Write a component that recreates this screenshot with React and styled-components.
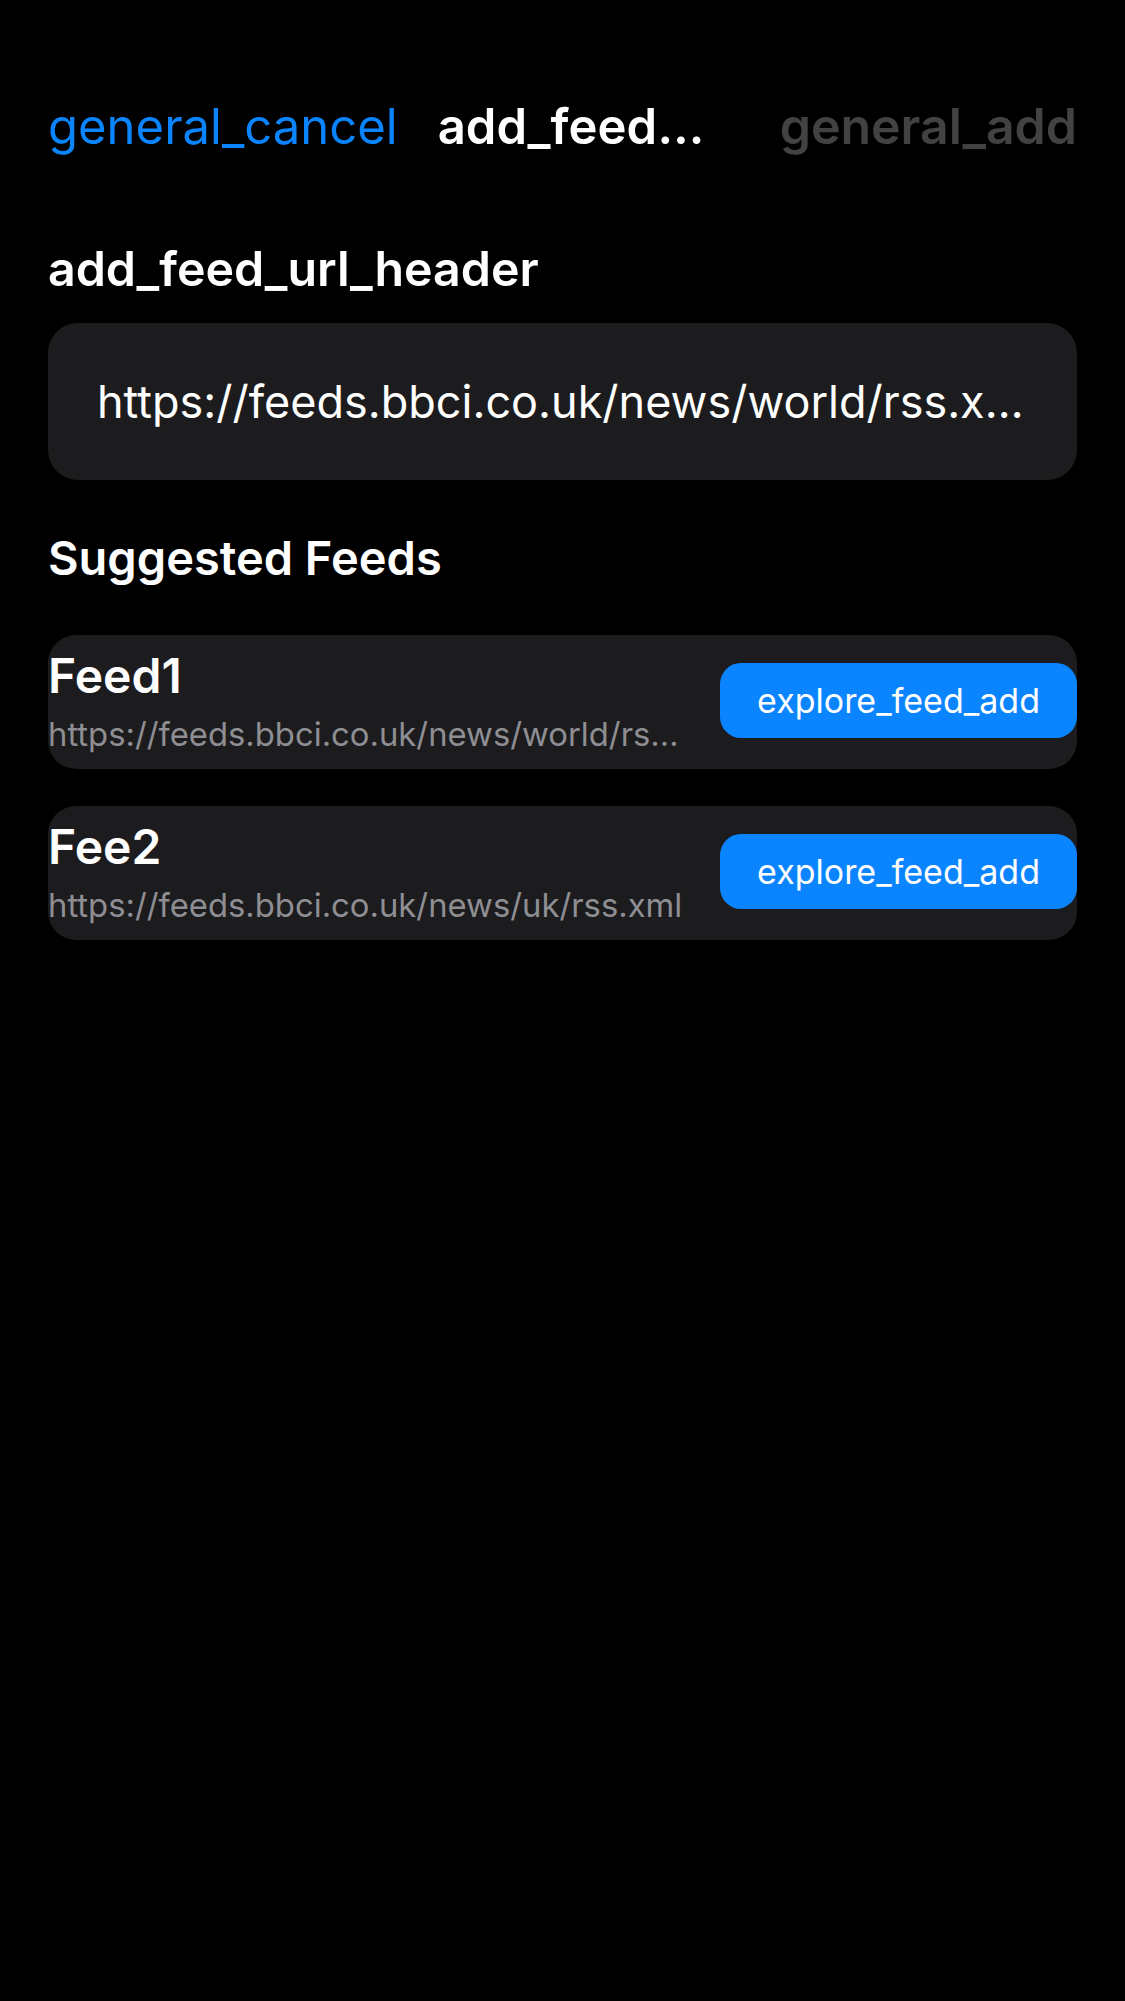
import React from 'react'
import styled, { createGlobalStyle } from 'styled-components'

const feeds = [
  { name: 'Feed1', url: 'https://feeds.bbci.co.uk/news/world/rss.xml' },
  { name: 'Fee2', url: 'https://feeds.bbci.co.uk/news/uk/rss.xml' },
]

const App = () => {
  return (
    <Screen>
      <GlobalStyle />
      <NavBar>
        <NavButton>general_cancel</NavButton>
        <NavTitle>add_feed_title</NavTitle>
        <NavButton $disabled>general_add</NavButton>
      </NavBar>
      <Content>
        <SectionHeader>add_feed_url_header</SectionHeader>
        <UrlField>
          <span>https://feeds.bbci.co.uk/news/world/rss.xml</span>
        </UrlField>
        <SectionHeader $spaced>Suggested Feeds</SectionHeader>
        <FeedList>
          {feeds.map((feed) => (
            <FeedCard key={feed.name}>
              <FeedInfo>
                <FeedName>{feed.name}</FeedName>
                <FeedUrl>{feed.url}</FeedUrl>
              </FeedInfo>
              <AddButton>explore_feed_add</AddButton>
            </FeedCard>
          ))}
        </FeedList>
      </Content>
    </Screen>
  )
}

const GlobalStyle = createGlobalStyle`
  html, body {
    margin: 0;
    padding: 0;
    background: #000;
  }
  body {
    font-family: Inter, "Noto Sans", "Liberation Sans", sans-serif;
    color: #fff;
    -webkit-font-smoothing: antialiased;
  }
`

const Screen = styled.div`
  min-height: 2001px;
  background: #000;
`

const NavBar = styled.header`
  display: flex;
  align-items: baseline;
  padding: 96px 48px 0;
  font-size: 49px;
  line-height: 61px;
`

const NavButton = styled.span`
  color: ${(p) => (p.$disabled ? '#424245' : '#0a84ff')};
  font-weight: ${(p) => (p.$disabled ? 600 : 400)};
  font-size: ${(p) => (p.$disabled ? '50px' : '49px')};
  white-space: nowrap;
  &:last-child {
    margin-left: auto;
  }
`

const NavTitle = styled.span`
  margin-left: 40px;
  width: 276px;
  font-weight: 600;
  white-space: nowrap;
  overflow: hidden;
  text-overflow: ellipsis;
`

const Content = styled.main`
  padding: 83px 48px 0;
  display: flex;
  flex-direction: column;
`

const SectionHeader = styled.h2`
  margin: ${(p) => (p.$spaced ? '49px 0 48px' : '0 0 25px')};
  font-size: ${(p) => (p.$spaced ? '47px' : '48.3px')};
  line-height: 58px;
  font-weight: 600;
`

const UrlField = styled.div`
  height: 157px;
  box-sizing: border-box;
  padding: 0 52px 0 49px;
  display: flex;
  align-items: center;
  background: #1c1c1e;
  border-radius: 30px;
  font-size: 45px;
  line-height: 61px;

  span {
    white-space: nowrap;
    overflow: hidden;
    text-overflow: ellipsis;
  }
`

const FeedList = styled.div`
  display: flex;
  flex-direction: column;
  gap: 37px;
`

const FeedCard = styled.div`
  display: flex;
  align-items: center;
  justify-content: space-between;
  gap: 30px;
  height: 134px;
  box-sizing: border-box;
  padding: 10px 0 13px;
  background: #1c1c1e;
  border-radius: 28px;
`

const FeedInfo = styled.div`
  display: flex;
  flex-direction: column;
  gap: 7px;
  min-width: 0;
  align-self: flex-start;
`

const FeedName = styled.div`
  font-size: 48px;
  line-height: 61px;
  font-weight: 600;
`

const FeedUrl = styled.div`
  font-size: 32.8px;
  line-height: 43px;
  color: #8e8e93;
  white-space: nowrap;
  overflow: hidden;
  text-overflow: ellipsis;
`

const AddButton = styled.button`
  flex: none;
  height: 75px;
  padding: 0 37px;
  border: 0;
  border-radius: 21px;
  background: #0a84ff;
  color: #fff;
  font-family: inherit;
  font-size: 34px;
  cursor: pointer;
`

export default App
